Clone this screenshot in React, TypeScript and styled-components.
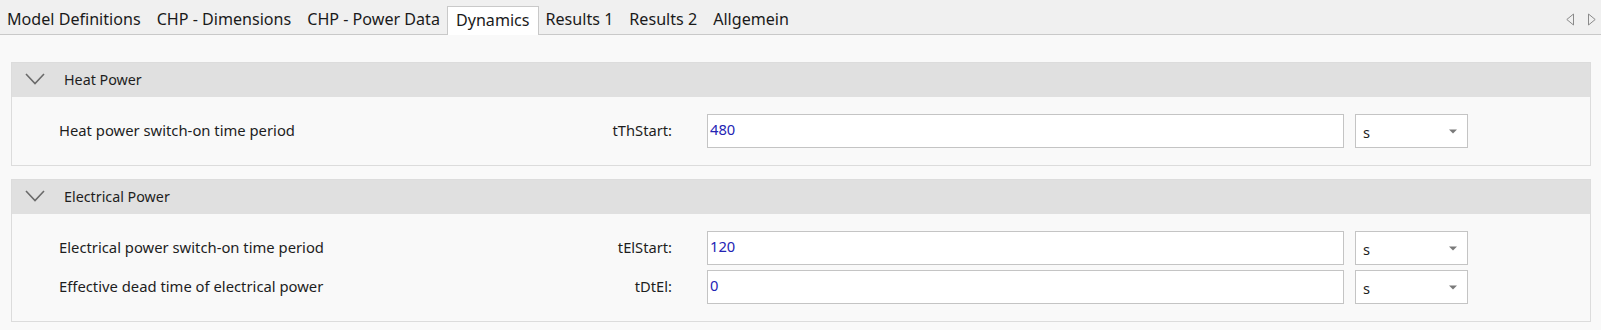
import React from "react";
import styled, { createGlobalStyle } from "styled-components";

const Global = createGlobalStyle`
  html, body { margin: 0; padding: 0; background: #f9f9f9; }
  body { font-family: "Noto Sans", "Open Sans", sans-serif; color: #1e1e1e; }
  * { box-sizing: border-box; }
`;

const Page = styled.div`
  width: 1601px;
  height: 330px;
  background: #f9f9f9;
  overflow: hidden;
`;

const TabBar = styled.div`
  height: 35px;
  background: #f0f0f0;
  border-bottom: 1px solid #c9c9c9;
  display: flex;
  align-items: flex-end;
`;

const Tab = styled.div<{ $active?: boolean }>`
  height: ${(p) => (p.$active ? "29px" : "28px")};
  margin: 0 ${(p) => (p.$active ? "-1px" : "0")} ${(p) => (p.$active ? "-1px" : "0")};
  padding: 0 8px 3px;
  display: flex;
  align-items: center;
  font-size: 16.1px;
  color: #1a1a1a;
  background: ${(p) => (p.$active ? "#ffffff" : "transparent")};
  border: ${(p) => (p.$active ? "1px solid #c9c9c9" : "none")};
  border-bottom: none;
  white-space: nowrap;
  &:first-child {
    padding-left: 7px;
  }
`;

const TabSpacer = styled.div`
  flex: 1;
`;

const ScrollArrows = styled.div`
  display: flex;
  gap: 14px;
  align-self: flex-start;
  margin: 13px 5px 0 0;
`;

const Content = styled.div`
  padding: 27px 10px 0 11px;
  display: flex;
  flex-direction: column;
  gap: 13px;
`;

const Group = styled.section`
  border: 1px solid #dcdcdc;
  background: #f9f9f9;
`;

const GroupHeader = styled.div`
  height: 34px;
  background: #e0e0e0;
  display: flex;
  align-items: center;
  padding: 0 0 2px 13px;
  gap: 19px;
  font-size: 14.3px;
  color: #1e1e1e;
`;

const GroupBody = styled.div`
  padding: 17px 122px 17px 47px;
  display: flex;
  flex-direction: column;
  gap: 5px;
`;

const Row = styled.div`
  display: grid;
  grid-template-columns: minmax(0, 1fr) auto 637px 124px;
  align-items: center;
  height: 34px;
`;

const Desc = styled.div`
  font-size: 14.8px;
  color: #1e1e1e;
  white-space: nowrap;
  padding-bottom: 2px;
`;

const Symbol = styled.div`
  font-size: 14.7px;
  color: #1e1e1e;
  text-align: right;
  margin-right: 35px;
  padding-bottom: 2px;
`;

const ValueBox = styled.div`
  height: 34px;
  background: #ffffff;
  border: 1px solid #c4c4c4;
  display: flex;
  align-items: center;
  padding: 0 0 4px 2px;
  font-size: 14.7px;
  color: #2424b4;
`;

const UnitSelect = styled.div`
  height: 34px;
  margin-left: 11px;
  background: #ffffff;
  border: 1px solid #c4c4c4;
  display: flex;
  align-items: center;
  justify-content: space-between;
  padding: 0 10px 0 7px;
  font-size: 14.7px;
  color: #1e1e1e;
`;

const UnitText = styled.span`
  padding-top: 2px;
`;

const Caret = () => (
  <svg width="8" height="5" viewBox="0 0 8 5">
    <polygon points="0,0.5 8,0.5 4,4.5" fill="#7a7a7a" />
  </svg>
);

const Chevron = () => (
  <svg width="20" height="12" viewBox="0 0 20 12">
    <polyline points="1,1 10,10.5 19,1" fill="none" stroke="#6a6a6a" strokeWidth="1.6" />
  </svg>
);

const ArrowLeft = () => (
  <svg width="8" height="13" viewBox="0 0 8 13">
    <polygon points="7.5,1 0.8,6.5 7.5,12" fill="none" stroke="#8a8a8a" strokeWidth="1" />
  </svg>
);

const ArrowRight = () => (
  <svg width="8" height="13" viewBox="0 0 8 13">
    <polygon points="0.5,1 7.2,6.5 0.5,12" fill="none" stroke="#8a8a8a" strokeWidth="1" />
  </svg>
);

type Param = { desc: string; sym: string; value: string; unit: string };

const groups: { title: string; rows: Param[] }[] = [
  {
    title: "Heat Power",
    rows: [{ desc: "Heat power switch-on time period", sym: "tThStart:", value: "480", unit: "s" }],
  },
  {
    title: "Electrical Power",
    rows: [
      { desc: "Electrical power switch-on time period", sym: "tElStart:", value: "120", unit: "s" },
      { desc: "Effective dead time of electrical power", sym: "tDtEl:", value: "0", unit: "s" },
    ],
  },
];

const tabs = [
  "Model Definitions",
  "CHP - Dimensions",
  "CHP - Power Data",
  "Dynamics",
  "Results 1",
  "Results 2",
  "Allgemein",
];

export default function App() {
  return (
    <Page>
      <Global />
      <TabBar>
        {tabs.map((t) => (
          <Tab key={t} $active={t === "Dynamics"}>
            {t}
          </Tab>
        ))}
        <TabSpacer />
        <ScrollArrows>
          <ArrowLeft />
          <ArrowRight />
        </ScrollArrows>
      </TabBar>
      <Content>
        {groups.map((g) => (
          <Group key={g.title}>
            <GroupHeader>
              <Chevron />
              {g.title}
            </GroupHeader>
            <GroupBody>
              {g.rows.map((r) => (
                <Row key={r.sym}>
                  <Desc>{r.desc}</Desc>
                  <Symbol>{r.sym}</Symbol>
                  <ValueBox>{r.value}</ValueBox>
                  <UnitSelect>
                    <UnitText>{r.unit}</UnitText>
                    <Caret />
                  </UnitSelect>
                </Row>
              ))}
            </GroupBody>
          </Group>
        ))}
      </Content>
    </Page>
  );
}
